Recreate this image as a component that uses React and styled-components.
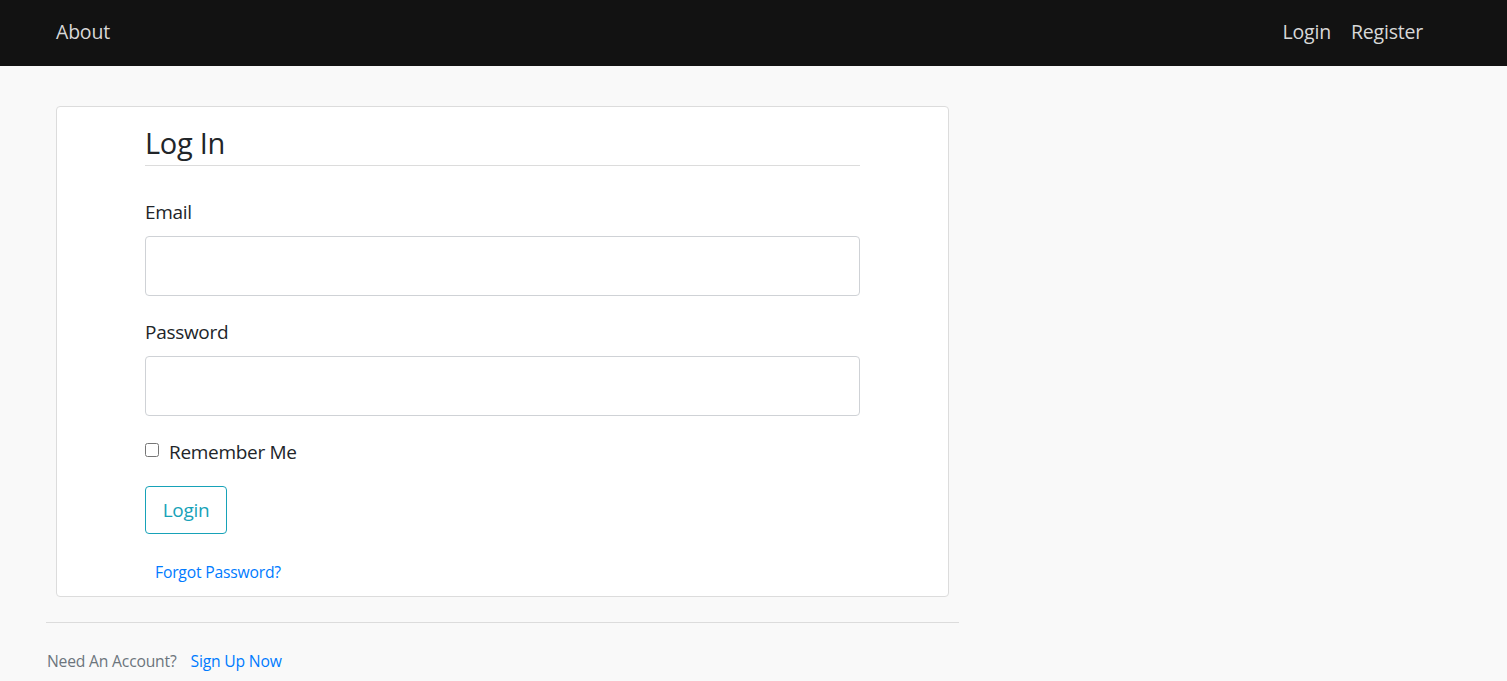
import React from "react";
import styled, { createGlobalStyle } from "styled-components";

const colors = {
  nav: "#121212",
  page: "#f9f9f9",
  border: "#dcdcdc",
  text: "#212529",
  teal: "#17a2b8",
  blue: "#007bff",
  muted: "#6c757d",
};

const GlobalStyle = createGlobalStyle`
  body {
    margin: 0;
    background: ${colors.page};
    font-family: "Open Sans", "Noto Sans", sans-serif;
    color: ${colors.text};
  }
`;

const Navbar = styled.nav`
  display: flex;
  align-items: center;
  justify-content: space-between;
  height: 66px;
  box-sizing: border-box;
  padding: 0 84px 4px 56px;
  background: ${colors.nav};

  .nav__group {
    display: flex;
    gap: 20px;
  }
`;

const NavLink = styled.a`
  color: #d8d8d8;
  font-size: 19.5px;
  text-decoration: none;
  letter-spacing: -0.2px;
`;

const Main = styled.main`
  width: 913px;
  padding: 40px 0 0 46px;
`;

const Card = styled.section`
  margin: 0 10px;
  background: #fff;
  border: 1px solid ${colors.border};
  border-radius: 4px;
  padding: 18px 0 14px;
`;

const Form = styled.form`
  margin: 0 88px;
  display: flex;
  flex-direction: column;
`;

const Title = styled.h2`
  margin: 0;
  font-size: 29px;
  font-weight: 400;
  line-height: 36px;
  padding-bottom: 4px;
  border-bottom: 1px solid ${colors.border};
  letter-spacing: -0.3px;
`;

const Label = styled.label`
  font-size: 19px;
  line-height: 26px;
  letter-spacing: -0.3px;
  margin-top: ${(p) => p.top}px;
  margin-bottom: 11px;
`;

const Input = styled.input`
  height: 60px;
  box-sizing: border-box;
  border: 1px solid #cfd2d6;
  border-radius: 4px;
  background: #fff;
`;

const CheckRow = styled.div`
  display: flex;
  align-items: center;
  gap: 10px;
  margin-top: 23px;
  font-size: 19px;
  letter-spacing: -0.3px;

  input {
    margin: 0 0 4px 0;
    width: 14px;
    height: 14px;
  }
`;

const Button = styled.button`
  align-self: flex-start;
  margin-top: 21px;
  height: 48px;
  width: 82px;
  border: 1px solid ${colors.teal};
  border-radius: 4px;
  background: transparent;
  color: ${colors.teal};
  font-family: inherit;
  font-size: 19px;
  letter-spacing: -0.3px;
`;

const SmallLink = styled.a`
  color: ${colors.blue};
  text-decoration: none;
  font-size: 15.7px;
  letter-spacing: -0.2px;
`;

const Forgot = styled.div`
  margin-top: 28px;
  padding-left: 10px;
  line-height: 20px;
`;

const Divider = styled.hr`
  margin: 25px 0 0;
  border: 0;
  border-top: 1px solid ${colors.border};
`;

const Footer = styled.p`
  margin: 27px 0 0 1px;
  font-size: 15.7px;
  letter-spacing: -0.2px;
  color: ${colors.muted};
  display: flex;
  gap: 14px;
`;

export default function App() {
  return (
    <>
      <GlobalStyle />
      <Navbar>
        <NavLink href="#">About</NavLink>
        <div className="nav__group">
          <NavLink href="#">Login</NavLink>
          <NavLink href="#">Register</NavLink>
        </div>
      </Navbar>
      <Main>
        <Card>
          <Form onSubmit={(e) => e.preventDefault()}>
            <Title>Log In</Title>
            <Label top={33} htmlFor="email">Email</Label>
            <Input id="email" type="email" />
            <Label top={23} htmlFor="password">Password</Label>
            <Input id="password" type="password" />
            <CheckRow>
              <input id="remember" type="checkbox" />
              <label htmlFor="remember">Remember Me</label>
            </CheckRow>
            <Button type="submit">Login</Button>
            <Forgot>
              <SmallLink href="#">Forgot Password?</SmallLink>
            </Forgot>
          </Form>
        </Card>
        <Divider />
        <Footer>
          <span>Need An Account?</span>
          <SmallLink href="#">Sign Up Now</SmallLink>
        </Footer>
      </Main>
    </>
  );
}
